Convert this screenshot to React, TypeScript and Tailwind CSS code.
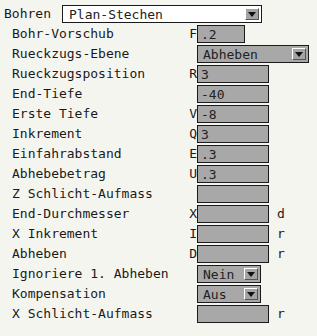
const mono = { fontFamily: '"DejaVu Sans Mono", "Liberation Mono", monospace' }

type Row = {
  label: string
  letter?: string
  value?: string
  width?: string
  select?: string
  selectWidth?: string
  suffix?: string
}

const rows: Row[] = [
  { label: 'Bohr-Vorschub', letter: 'F', value: '.2', width: 'w-[48px]' },
  { label: 'Rueckzugs-Ebene', select: 'Abheben', selectWidth: 'w-[112px]' },
  { label: 'Rueckzugsposition', letter: 'R', value: '3' },
  { label: 'End-Tiefe', value: '-40' },
  { label: 'Erste Tiefe', letter: 'V', value: '-8' },
  { label: 'Inkrement', letter: 'Q', value: '3' },
  { label: 'Einfahrabstand', letter: 'E', value: '.3' },
  { label: 'Abhebebetrag', letter: 'U', value: '.3' },
  { label: 'Z Schlicht-Aufmass', value: '' },
  { label: 'End-Durchmesser', letter: 'X', value: '', suffix: 'd' },
  { label: 'X Inkrement', letter: 'I', value: '', suffix: 'r' },
  { label: 'Abheben', letter: 'D', value: '', suffix: 'r' },
  { label: 'Ignoriere 1. Abheben', select: 'Nein', selectWidth: 'w-[64px]' },
  { label: 'Kompensation', select: 'Aus', selectWidth: 'w-[64px]' },
  { label: 'X Schlicht-Aufmass', value: '', suffix: 'r' },
]

function DropButton() {
  return (
    <div className="absolute right-[2px] top-[2px] bottom-[2px] w-[14px] bg-[#a4a4a4] border-t border-l border-t-white border-l-white border-b border-r border-b-[#555] border-r-[#555] flex items-center justify-center">
      <svg width="8" height="5" viewBox="0 0 8 5">
        <path d="M0 0 H8 L4 5 Z" fill="#111" />
      </svg>
    </div>
  )
}

function Select({ value, className }: { value: string; className: string }) {
  return (
    <div
      className={`relative h-[18px] border border-[#1a1a1a] flex items-center pl-[5px] text-[13px] leading-none text-[#222] ${className}`}
    >
      {value}
      <DropButton />
    </div>
  )
}

export default function App() {
  return (
    <div
      className="w-[317px] h-[336px] bg-[#f5f5f0] pt-[4px] text-[13px] text-[#1a1a1a]"
      style={mono}
    >
      <div className="flex items-center h-5 pl-[4px]">
        <span className="w-[58px]">Bohren</span>
        <Select value="Plan-Stechen" className="w-[200px] bg-white pl-[6px]" />
      </div>
      {rows.map((r) => (
        <div key={r.label} className="flex items-center h-5 pl-[12px]">
          <span className="w-[177px] whitespace-nowrap">{r.label}</span>
          <span className="w-[8px] text-right">{r.letter ?? ''}</span>
          {r.select ? (
            <Select value={r.select} className={`${r.selectWidth} bg-[#a8a8a8]`} />
          ) : (
            <div
              className={`h-[18px] ${r.width ?? 'w-[72px]'} bg-[#a8a8a8] border border-[#1a1a1a] flex items-center pl-[3px] leading-none text-[#222]`}
            >
              {r.value}
            </div>
          )}
          {r.suffix && <span className="ml-[8px]">{r.suffix}</span>}
        </div>
      ))}
    </div>
  )
}
